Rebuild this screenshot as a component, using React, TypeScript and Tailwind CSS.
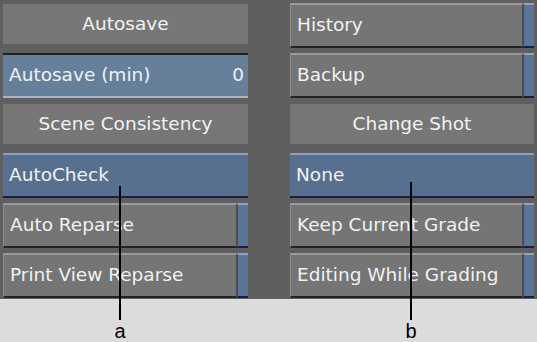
import React from 'react';

function Header({ label }: { label: string }) {
  return (
    <div className="mt-[1px] h-[40px] bg-[#777777] flex items-center justify-center text-[#f2f2f2]">
      {label}
    </div>
  );
}

function Button({ label, tab }: { label: string; tab?: boolean }) {
  return (
    <div className="h-[45px] flex">
      <div className="flex-1 flex items-center pl-[6px] bg-[#757575] border-t-2 border-t-[#9a9a9a] border-l border-l-[#8c8c8c] border-r border-r-[#4a4a4a] border-b-2 border-b-[#232323] text-[#f2f2f2]">
        {label}
      </div>
      {tab && (
        <div className="w-[11px] bg-[#5b7598] border-t-2 border-t-[#8da3c2] border-b-2 border-b-[#1c1c48] border-l border-l-[#3e4e66]" />
      )}
    </div>
  );
}

function Field({ label, value }: { label: string; value: string }) {
  return (
    <div className="h-[45px] flex items-center justify-between pl-[6px] pr-[4px] bg-[#66809c] border-t-2 border-t-[#1e1e1e] border-b-2 border-b-[#a8b4c4] text-[#f2f2f2]">
      <span>{label}</span>
      <span>{value}</span>
    </div>
  );
}

function Selected({ label }: { label: string }) {
  return (
    <div className="h-[45px] flex items-center pl-[6px] bg-[#57708f] border-t-2 border-t-[#89a0c0] border-b-2 border-b-[#1c1c48] text-[#f2f2f2]">
      {label}
    </div>
  );
}

export default function App() {
  return (
    <div className="relative w-[537px] h-[342px] bg-[#dcdcdc] overflow-hidden" style={{ fontFamily: '"DejaVu Sans", sans-serif' }}>
      {/* menu panel */}
      <div className="h-[299px] bg-[#5f5f5f] pt-[3px] pl-[3px] pr-[3px] grid grid-cols-[245px_244px] gap-x-[42px] gap-y-[5px] auto-rows-[45px] text-[18.5px] leading-none">
        <Header label="Autosave" />
        <Button label="History" tab />

        <Field label="Autosave (min)" value="0" />
        <Button label="Backup" tab />

        <Header label="Scene Consistency" />
        <Header label="Change Shot" />

        <Selected label="AutoCheck" />
        <Selected label="None" />

        <Button label="Auto Reparse" tab />
        <Button label="Keep Current Grade" tab />

        <Button label="Print View Reparse" tab />
        <Button label="Editing While Grading" tab />
      </div>

      {/* callouts */}
      <div className="absolute left-[119px] top-[186px] w-[2px] h-[134px] bg-black" />
      <div className="absolute left-[410px] top-[182px] w-[2px] h-[138px] bg-black" />
      <div className="absolute left-[110px] top-[322px] w-[20px] text-center text-[20px] leading-[18px] text-black" style={{ fontFamily: '"Liberation Sans", Arial, sans-serif' }}>a</div>
      <div className="absolute left-[401px] top-[322px] w-[20px] text-center text-[20px] leading-[18px] text-black" style={{ fontFamily: '"Liberation Sans", Arial, sans-serif' }}>b</div>
    </div>
  );
}
